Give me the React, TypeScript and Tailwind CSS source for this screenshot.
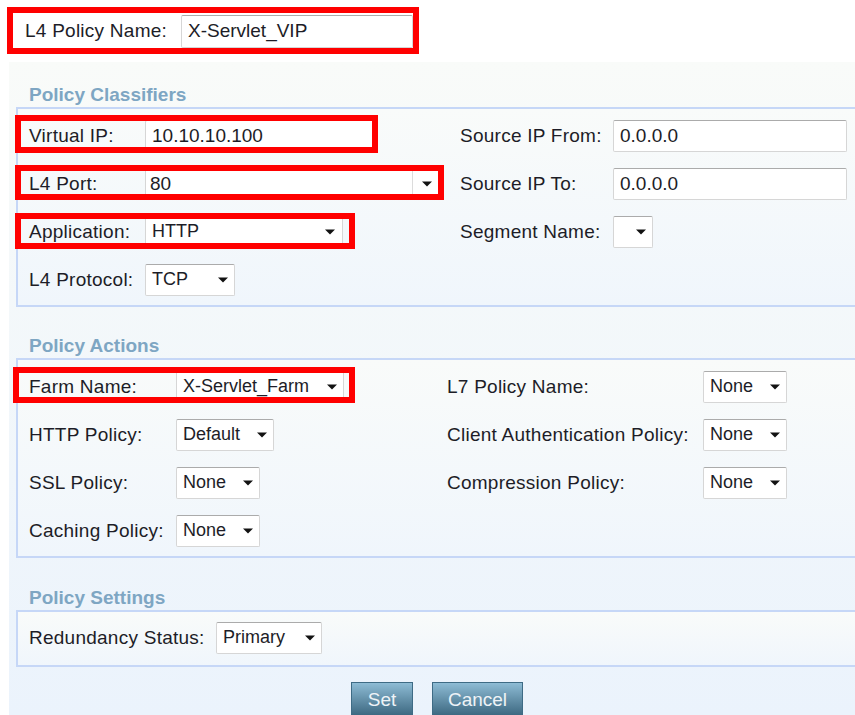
import React from "react";

function Caret() {
  return (
    <svg width="10" height="6" viewBox="0 0 10 6" className="shrink-0">
      <path d="M0 0.5h10L5 5.5z" fill="#121212" />
    </svg>
  );
}

function TextInput({ value, className = "" }: { value: string; className?: string }) {
  return (
    <div
      className={`h-[32px] bg-white border border-[#d6d6d6] border-t-[#ababab] rounded-[2px] flex items-center pl-[6px] whitespace-nowrap tracking-normal ${className}`}
    >
      {value}
    </div>
  );
}

function Dropdown({ value, className = "" }: { value: string; className?: string }) {
  return (
    <div
      className={`h-[32px] bg-white border border-[#d6d6d6] border-t-[#ababab] rounded-[2px] flex items-center justify-between pl-[6px] pr-[6px] whitespace-nowrap text-[18px] tracking-normal ${className}`}
    >
      <span className="-mt-[1px]">{value}</span>
      <Caret />
    </div>
  );
}

function Combo({ value }: { value: string }) {
  return (
    <div className="h-[32px] w-[296px] bg-white border border-[#d6d6d6] border-t-[#ababab] rounded-[2px] flex items-center tracking-normal">
      <span className="flex-1 pl-[4px]">{value}</span>
      <div className="w-[28px] h-full border-l border-[#dcdcdc] flex items-center justify-center">
        <Caret />
      </div>
    </div>
  );
}

function Heading({ children }: { children: React.ReactNode }) {
  return (
    <div className="pl-[20px] h-[24px] leading-[24px] font-bold tracking-normal text-[#7ea6c3]">{children}</div>
  );
}

function Box({ children, className = "" }: { children: React.ReactNode; className?: string }) {
  return (
    <div
      className={`ml-[7px] w-[850px] border-2 border-[#c6d7f7] bg-gradient-to-b from-[#f9fbfa] to-[#f0f6fc] pl-[11px] ${className}`}
    >
      {children}
    </div>
  );
}

function Row({ children }: { children: React.ReactNode }) {
  return <div className="h-[48px] flex items-center">{children}</div>;
}

function Mark({ className }: { className: string }) {
  return <div className={`absolute border-[6px] border-[#ff0000] pointer-events-none ${className}`} />;
}

export default function App() {
  return (
    <div className="w-[855px] h-[715px] bg-white overflow-hidden relative font-['Liberation_Sans',Arial,sans-serif] text-[19px] tracking-[0.25px] text-[#1d1d27]">
      {/* policy name */}
      <div className="h-[62px] pt-[15px] pl-[25px]">
        <div className="flex items-center h-[33px]">
          <span className="w-[156px]">L4 Policy Name:</span>
          <TextInput value="X-Servlet_VIP" className="w-[232px] h-[33px] pl-[4px]" />
        </div>
      </div>

      <div className="ml-[9px] h-[653px] bg-gradient-to-b from-[#f9fbf9] to-[#ebf3fc] overflow-hidden pt-[21px]">
        {/* classifiers */}
        <Heading>Policy Classifiers</Heading>
        <Box className="pt-[3px] pb-[1px]">
          <Row>
            <div className="w-[431px] flex items-center">
              <span className="w-[116px]">Virtual IP:</span>
              <TextInput value="10.10.10.100" className="w-[232px]" />
            </div>
            <span className="w-[153px]">Source IP From:</span>
            <TextInput value="0.0.0.0" className="w-[234px]" />
          </Row>
          <Row>
            <div className="w-[431px] flex items-center">
              <span className="w-[116px]">L4 Port:</span>
              <Combo value="80" />
            </div>
            <span className="w-[153px]">Source IP To:</span>
            <TextInput value="0.0.0.0" className="w-[234px]" />
          </Row>
          <Row>
            <div className="w-[431px] flex items-center">
              <span className="w-[116px]">Application:</span>
              <Dropdown value="HTTP" className="w-[198px] pr-[7px]" />
            </div>
            <span className="w-[153px]">Segment Name:</span>
            <Dropdown value="" className="w-[40px]" />
          </Row>
          <Row>
            <div className="w-[431px] flex items-center">
              <span className="w-[116px]">L4 Protocol:</span>
              <Dropdown value="TCP" className="w-[90px] pr-[4px]" />
            </div>
          </Row>
        </Box>

        {/* actions */}
        <div className="mt-[27px]">
          <Heading>Policy Actions</Heading>
        </div>
        <Box className="pt-[3px] pb-[1px]">
          <Row>
            <div className="w-[418px] flex items-center">
              <span className="w-[147px]">Farm Name:</span>
              <Dropdown value="X-Servlet_Farm" className="w-[168px]" />
            </div>
            <span className="w-[256px]">L7 Policy Name:</span>
            <Dropdown value="None" className="w-[84px]" />
          </Row>
          <Row>
            <div className="w-[418px] flex items-center">
              <span className="w-[147px]">HTTP Policy:</span>
              <Dropdown value="Default" className="w-[98px]" />
            </div>
            <span className="w-[256px]">Client Authentication Policy:</span>
            <Dropdown value="None" className="w-[84px]" />
          </Row>
          <Row>
            <div className="w-[418px] flex items-center">
              <span className="w-[147px]">SSL Policy:</span>
              <Dropdown value="None" className="w-[84px]" />
            </div>
            <span className="w-[256px]">Compression Policy:</span>
            <Dropdown value="None" className="w-[84px]" />
          </Row>
          <Row>
            <div className="w-[418px] flex items-center">
              <span className="w-[147px]">Caching Policy:</span>
              <Dropdown value="None" className="w-[84px]" />
            </div>
          </Row>
        </Box>

        {/* settings */}
        <div className="mt-[28px]">
          <Heading>Policy Settings</Heading>
        </div>
        <Box className="pt-[2px] pb-[3px]">
          <Row>
            <span className="w-[187px]">Redundancy Status:</span>
            <Dropdown value="Primary" className="w-[106px] pr-[5px]" />
          </Row>
        </Box>

        <div className="mt-[15px] flex gap-[19px] pl-[342px] tracking-normal">
          <button className="w-[62px] h-[40px] border border-[#3e6b85] bg-gradient-to-b from-[#8ebcd5] to-[#2f5b73] text-[#eef3f7] pb-[4px]">
            Set
          </button>
          <button className="w-[91px] h-[40px] border border-[#3e6b85] bg-gradient-to-b from-[#8ebcd5] to-[#2f5b73] text-[#eef3f7] pb-[4px]">
            Cancel
          </button>
        </div>
      </div>

      {/* highlight frames */}
      <Mark className="left-[7px] top-[7px] w-[412px] h-[47px]" />
      <Mark className="left-[15px] top-[115px] w-[363px] h-[38px]" />
      <Mark className="left-[15px] top-[165px] w-[429px] h-[35px]" />
      <Mark className="left-[15px] top-[213px] w-[340px] h-[36px]" />
      <Mark className="left-[13px] top-[367px] w-[342px] h-[36px]" />
    </div>
  );
}
